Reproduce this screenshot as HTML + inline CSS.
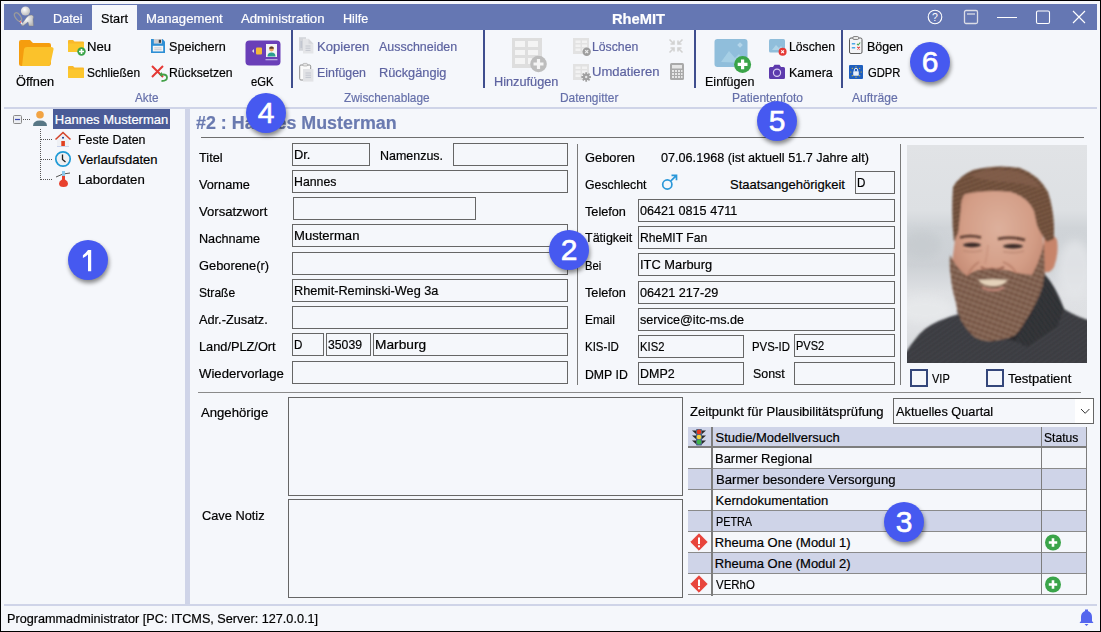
<!DOCTYPE html>
<html><head><meta charset="utf-8"><style>
html,body{margin:0;padding:0;}
body{width:1101px;height:632px;background:#000;position:relative;overflow:hidden;font-family:"Liberation Sans",sans-serif;}
.a{position:absolute;}
.t{position:absolute;white-space:nowrap;-webkit-text-stroke:0.2px currentColor;}
svg.a{overflow:visible;}
.badge{position:absolute;width:40px;height:40px;border-radius:50%;background:#4659f0;color:#fff;font-size:30px;line-height:40px;text-align:center;box-shadow:1px 3px 4px rgba(0,0,0,0.45);-webkit-text-stroke:0.6px #fff;}
</style></head><body>
<div class="a" style="left:1px;top:1px;width:1099px;height:630px;background:#f5f7fb"></div>
<div class="a" style="left:4px;top:4px;width:1093px;height:26px;background:#6577b3"></div>
<div class="a" style="left:92px;top:5px;width:45px;height:25px;background:#f5f7fb"></div>
<div class="t" style="left:53.40px;top:12.20px;font-size:13px;line-height:13px;color:#fff;font-weight:400;transform:scaleX(0.9736);transform-origin:0 0;">Datei</div>
<div class="t" style="left:101.00px;top:12.20px;font-size:13px;line-height:13px;color:#000;font-weight:400;transform:scaleX(0.9818);transform-origin:0 0;">Start</div>
<div class="t" style="left:146.10px;top:12.20px;font-size:13px;line-height:13px;color:#fff;font-weight:400;transform:scaleX(1.0105);transform-origin:0 0;">Management</div>
<div class="t" style="left:241.40px;top:12.20px;font-size:13px;line-height:13px;color:#fff;font-weight:400;transform:scaleX(1.0133);transform-origin:0 0;">Administration</div>
<div class="t" style="left:343.20px;top:12.20px;font-size:13px;line-height:13px;color:#fff;font-weight:400;transform:scaleX(0.9692);transform-origin:0 0;">Hilfe</div>
<div class="t" style="left:611.80px;top:10.50px;font-size:15px;line-height:15px;color:#fff;font-weight:700;transform:scaleX(0.9797);transform-origin:0 0;">RheMIT</div>
<svg class="a" style="left:12px;top:5px;" width="24" height="23" viewBox="0 0 24 23">
<defs><radialGradient id="hg" cx="0.4" cy="0.35" r="0.7"><stop offset="0" stop-color="#fff"/><stop offset="1" stop-color="#b8b8b8"/></radialGradient></defs>
<path d="M9 20 L15 12 Q17 9.5 20 10 Q22.5 11 21 14 L21.5 21 L17 21 L16 17 L11 21 Z" fill="url(#hg)" stroke="#777" stroke-width="0.4"/>
<circle cx="13.5" cy="6" r="4.6" fill="url(#hg)"/>
<ellipse cx="6" cy="12" rx="2.6" ry="4.8" transform="rotate(-35 6 12)" fill="none" stroke="#9a9a9a" stroke-width="1.3"/>
<line x1="8" y1="16" x2="10" y2="19" stroke="#eee" stroke-width="1.5"/>
<circle cx="8.5" cy="17" r="0.8" fill="#e33"/>
</svg>
<svg class="a" style="left:926px;top:8px;" width="18" height="18" viewBox="0 0 18 18"><circle cx="9" cy="9" r="6.8" fill="none" stroke="#fff" stroke-width="1.1"/><text x="9" y="12.6" font-size="10.5" font-family="Liberation Sans" fill="#fff" text-anchor="middle">?</text></svg>
<svg class="a" style="left:962px;top:9px;" width="18" height="17" viewBox="0 0 18 17"><rect x="2.5" y="1.5" width="13" height="13" rx="1.5" fill="none" stroke="#dcdde6" stroke-width="1.3"/><line x1="5" y1="5" x2="13" y2="5" stroke="#dcdde6" stroke-width="1.3"/></svg>
<div class="a" style="left:997px;top:16.5px;width:20px;height:1.2px;background:#fff"></div>
<svg class="a" style="left:1034px;top:9px;" width="18" height="17" viewBox="0 0 18 17"><rect x="2.5" y="2" width="13" height="12.5" rx="1.5" fill="none" stroke="#fff" stroke-width="1.1"/></svg>
<svg class="a" style="left:1071px;top:9px;" width="17" height="17" viewBox="0 0 17 17"><path d="M2 2 L14 14 M14 2 L2 14" stroke="#fff" stroke-width="1.15"/></svg>
<div class="a" style="left:291px;top:30px;width:2px;height:57.5px;background:#3f4e8e"></div>
<div class="a" style="left:483px;top:30px;width:2px;height:57.5px;background:#3f4e8e"></div>
<div class="a" style="left:694px;top:30px;width:2px;height:57.5px;background:#3f4e8e"></div>
<div class="a" style="left:841px;top:30px;width:2px;height:57.5px;background:#3f4e8e"></div>
<div class="a" style="left:4px;top:107px;width:1093px;height:2px;background:#cfd4e8"></div>
<svg class="a" style="left:18px;top:39px;" width="36" height="28" viewBox="0 0 36 28"><path d="M1 3 Q1 1 3 1 L12 1 L15 4 L31 4 Q33 4 33 6 L33 24 Q33 27 30 27 L3 27 Q1 27 1 25 Z" fill="#f59d0e"/>
<path d="M6 10 Q6.5 8 9 8 L33 8 Q36 8 35.5 10.5 L32.5 24.5 Q32 27 29.5 27 L4 27 Z" fill="#fbc22b"/></svg>
<div class="t" style="left:15.70px;top:75.00px;font-size:13px;line-height:13px;color:#000;font-weight:400;transform:scaleX(0.9820);transform-origin:0 0;">&Ouml;ffnen</div>
<svg class="a" style="left:67px;top:38px;" width="20" height="20" viewBox="0 0 20 20"><path d="M1 3 Q1 2 2 2 L6 2 L7.5 3.5 L16 3.5 Q17 3.5 17 4.5 L17 13 Q17 14 16 14 L2 14 Q1 14 1 13 Z" fill="#f9b92a"/>
<path d="M1 5.5 L17 5.5 L17 13 Q17 14 16 14 L2 14 Q1 14 1 13 Z" fill="#fcc72e"/>
<circle cx="14.5" cy="13.5" r="4.2" fill="#3aa449"/><path d="M14.5 11 V16 M12 13.5 H17" stroke="#fff" stroke-width="1.6"/></svg>
<div class="t" style="left:87.00px;top:40.00px;font-size:13px;line-height:13px;color:#000;font-weight:400;transform:scaleX(1.0084);transform-origin:0 0;">Neu</div>
<svg class="a" style="left:67px;top:64px;" width="20" height="16" viewBox="0 0 20 16"><path d="M1 3 Q1 2 2 2 L6 2 L7.5 3.5 L16 3.5 Q17 3.5 17 4.5 L17 13 Q17 14 16 14 L2 14 Q1 14 1 13 Z" fill="#f9b92a"/>
<path d="M1 5.5 L17 5.5 L17 13 Q17 14 16 14 L2 14 Q1 14 1 13 Z" fill="#fcc72e"/></svg>
<div class="t" style="left:87.00px;top:66.00px;font-size:13px;line-height:13px;color:#000;font-weight:400;transform:scaleX(0.9170);transform-origin:0 0;">Schlie&szlig;en</div>
<svg class="a" style="left:150px;top:38px;" width="16" height="16" viewBox="0 0 16 16"><path d="M1 1 L12.5 1 L15 3.5 L15 15 L1 15 Z" fill="#2e8fd5"/>
<rect x="3.8" y="1" width="8.2" height="4.6" fill="#cfcfd2"/><rect x="8.8" y="1.8" width="2.2" height="3" fill="#3a3a3a"/>
<rect x="2.8" y="7.8" width="10.4" height="5.6" fill="#f5f5f6"/><path d="M4.3 9.9 H11.7 M4.3 11.7 H11.7" stroke="#c4c4c8" stroke-width="0.9"/></svg>
<div class="t" style="left:169.00px;top:40.00px;font-size:13px;line-height:13px;color:#000;font-weight:400;transform:scaleX(0.9709);transform-origin:0 0;">Speichern</div>
<svg class="a" style="left:150px;top:64px;" width="19" height="19" viewBox="0 0 19 19"><path d="M2 2 L13 13 M13 2 L2 13" stroke="#e53935" stroke-width="2"/>
<path d="M11.5 17 Q17 17 17 13.5 Q17 10.5 13 10.5 L10.5 10.5" fill="none" stroke="#43a047" stroke-width="1.8"/><path d="M9 10.5 L12 8 L12 13 Z" fill="#43a047"/></svg>
<div class="t" style="left:169.00px;top:65.50px;font-size:13px;line-height:13px;color:#000;font-weight:400;transform:scaleX(0.9367);transform-origin:0 0;">R&uuml;cksetzen</div>
<svg class="a" style="left:245px;top:40px;" width="36" height="26" viewBox="0 0 36 26"><rect x="0.5" y="0.5" width="35" height="25" rx="4" fill="#6a3fb8"/>
<rect x="21" y="4" width="11" height="13" fill="#f4f4f6"/>
<circle cx="26.5" cy="9" r="2.4" fill="#f0a35e"/><path d="M22.5 16.5 Q22.5 12.5 26.5 12.5 Q30.5 12.5 30.5 16.5 Z" fill="#2a9d8f"/>
<path d="M26.5 6.5 Q24 6.3 24.3 8.8 L28.8 8.8 Q29 6.3 26.5 6.5Z" fill="#5a3a2a"/>
<rect x="20.5" y="19" width="12" height="1.3" fill="#b6a6e0"/>
<rect x="11" y="7.5" width="6" height="7" rx="1" fill="#f4b93a"/><path d="M7 11 L9 9 L9 13 Z" fill="#ddd"/></svg>
<div class="t" style="left:250.50px;top:74.50px;font-size:13px;line-height:13px;color:#000;font-weight:400;transform:scaleX(0.8654);transform-origin:0 0;">eGK</div>
<div class="t" style="left:135.40px;top:90.60px;font-size:13px;line-height:13px;color:#6670aa;font-weight:400;transform:scaleX(0.9038);transform-origin:0 0;">Akte</div>
<svg class="a" style="left:298px;top:36px;" width="17" height="19" viewBox="0 0 17 19"><rect x="1" y="1.2" width="7" height="13.5" fill="#d3d5da"/><rect x="2.5" y="5" width="1.6" height="7" fill="#c2c6d0"/>
<path d="M5 2.8 L10.5 2.8 L15.4 7.8 L15.4 17.4 L5 17.4 Z" fill="#e4e5e8"/><path d="M10.5 2.8 L10.5 7.8 L15.4 7.8" fill="#d6d7db"/>
<path d="M7.5 10 H12.5 M7.5 12.2 H12.5 M7.5 14.4 H12.5" stroke="#c0c3cc" stroke-width="0.9"/></svg>
<div class="t" style="left:317.40px;top:40.00px;font-size:13px;line-height:13px;color:#5d63a0;font-weight:400;transform:scaleX(1.0058);transform-origin:0 0;">Kopieren</div>
<div class="t" style="left:378.50px;top:40.00px;font-size:13px;line-height:13px;color:#5d63a0;font-weight:400;transform:scaleX(0.9572);transform-origin:0 0;">Ausschneiden</div>
<svg class="a" style="left:298px;top:62px;" width="17" height="21" viewBox="0 0 17 21"><rect x="1.7" y="3" width="11" height="15" rx="1.2" fill="#fafafa" stroke="#8e8e8e" stroke-width="1"/><rect x="5" y="1.4" width="4.4" height="2.6" rx="0.8" fill="#e6e6e6" stroke="#a0a0a0" stroke-width="0.6"/>
<path d="M5 7 L15.4 7 L15.4 19.6 L5 19.6 Z" fill="#e2e3e6"/>
<path d="M7.5 11 H13 M7.5 13.2 H13 M7.5 15.4 H13" stroke="#c0c3cc" stroke-width="0.9"/></svg>
<div class="t" style="left:317.40px;top:65.60px;font-size:13px;line-height:13px;color:#5d63a0;font-weight:400;transform:scaleX(0.9552);transform-origin:0 0;">Einf&uuml;gen</div>
<div class="t" style="left:378.50px;top:65.60px;font-size:13px;line-height:13px;color:#5d63a0;font-weight:400;transform:scaleX(0.9825);transform-origin:0 0;">R&uuml;ckg&auml;ngig</div>
<div class="t" style="left:343.60px;top:90.80px;font-size:13px;line-height:13px;color:#6670aa;font-weight:400;transform:scaleX(0.9116);transform-origin:0 0;">Zwischenablage</div>
<svg class="a" style="left:511px;top:37px;" width="38" height="37" viewBox="0 0 38 37"><rect x="1" y="1" width="30" height="30" fill="#dedede"/>
<g fill="#f4f4f4"><rect x="4" y="4" width="10" height="6"/><rect x="17" y="4" width="10" height="6"/><rect x="4" y="13" width="10" height="5"/><rect x="17" y="13" width="10" height="5"/><rect x="4" y="21" width="10" height="6"/><rect x="17" y="21" width="10" height="6"/></g>
<circle cx="27.5" cy="27" r="8.3" fill="#bdbdbd"/><path d="M27.5 22 V32 M22.5 27 H32.5" stroke="#f4f4f4" stroke-width="3.2"/></svg>
<div class="t" style="left:494.20px;top:75.00px;font-size:13px;line-height:13px;color:#5d63a0;font-weight:400;transform:scaleX(0.9787);transform-origin:0 0;">Hinzuf&uuml;gen</div>
<svg class="a" style="left:572px;top:37px;" width="22" height="22" viewBox="0 0 22 22"><rect x="1" y="1" width="16" height="16" fill="#e2e2e2"/><g fill="#f2f2f2"><rect x="3.5" y="3.5" width="5" height="2.5"/><rect x="10" y="3.5" width="5" height="2.5"/><rect x="3.5" y="7.5" width="5" height="2.5"/><rect x="10" y="7.5" width="5" height="2.5"/><rect x="3.5" y="11.5" width="5" height="2.5"/><rect x="10" y="11.5" width="5" height="2.5"/></g><circle cx="14.7" cy="14.7" r="4.2" fill="#9e9e9e"/><path d="M13.2 13.2 L16.2 16.2 M16.2 13.2 L13.2 16.2" stroke="#eee" stroke-width="1.2"/></svg>
<div class="t" style="left:592.40px;top:40.00px;font-size:13px;line-height:13px;color:#5d63a0;font-weight:400;transform:scaleX(0.9409);transform-origin:0 0;">L&ouml;schen</div>
<svg class="a" style="left:572px;top:63px;" width="22" height="22" viewBox="0 0 22 22"><rect x="1" y="1" width="16" height="16" fill="#e2e2e2"/><g fill="#f2f2f2"><rect x="3.5" y="3.5" width="5" height="2.5"/><rect x="10" y="3.5" width="5" height="2.5"/><rect x="3.5" y="7.5" width="5" height="2.5"/><rect x="10" y="7.5" width="5" height="2.5"/><rect x="3.5" y="11.5" width="5" height="2.5"/><rect x="10" y="11.5" width="5" height="2.5"/></g><g transform="translate(14.2 14)"><circle r="3.3" fill="#a0a0a0"/><g stroke="#a0a0a0" stroke-width="1.8"><path d="M0 -4.8 V4.8 M-4.8 0 H4.8 M-3.4 -3.4 L3.4 3.4 M3.4 -3.4 L-3.4 3.4"/></g><circle r="1.2" fill="#e8e8e8"/></g></svg>
<div class="t" style="left:592.40px;top:65.40px;font-size:13px;line-height:13px;color:#5d63a0;font-weight:400;transform:scaleX(1.0045);transform-origin:0 0;">Umdatieren</div>
<svg class="a" style="left:668px;top:38px;" width="17" height="16" viewBox="0 0 17 16"><g stroke="#d2d2d2" stroke-width="1.6" fill="none"><path d="M1.5 1.5 L6 6 M6 2.5 V6 H2.5"/><path d="M14.5 1.5 L10 6 M10 2.5 V6 H13.5"/><path d="M1.5 14.5 L6 10 M6 13.5 V10 H2.5"/><path d="M14.5 14.5 L10 10 M10 13.5 V10 H13.5"/></g></svg>
<svg class="a" style="left:669px;top:62px;" width="16" height="19" viewBox="0 0 16 19"><rect x="1" y="1" width="14" height="17" rx="1.5" fill="#a9a9a9"/><rect x="3" y="3" width="10" height="3.5" fill="#e6e6e6"/><g fill="#e6e6e6"><rect x="3" y="8" width="2" height="2"/><rect x="6" y="8" width="2" height="2"/><rect x="9" y="8" width="2" height="2"/><rect x="12" y="8" width="1.5" height="2"/><rect x="3" y="11" width="2" height="2"/><rect x="6" y="11" width="2" height="2"/><rect x="9" y="11" width="2" height="2"/><rect x="12" y="11" width="1.5" height="2"/><rect x="3" y="14" width="2" height="2"/><rect x="6" y="14" width="2" height="2"/><rect x="9" y="14" width="2" height="2"/><rect x="12" y="14" width="1.5" height="2"/></g></svg>
<div class="t" style="left:559.60px;top:90.50px;font-size:13px;line-height:13px;color:#6670aa;font-weight:400;transform:scaleX(0.9182);transform-origin:0 0;">Datengitter</div>
<svg class="a" style="left:713px;top:38px;" width="44" height="36" viewBox="0 0 44 36"><rect x="1.5" y="1" width="33" height="28" rx="3" fill="#90bedb"/>
<path d="M8 24 L16 13 L22 20 L26 16 L33 25 Z" fill="#a9d0e6" opacity="0.9"/><rect x="25" y="5" width="4" height="4" fill="#b4d6ea" transform="rotate(45 27 7)"/>
<circle cx="29.6" cy="26.4" r="8.5" fill="#3aa449"/><path d="M29.6 21.5 V31.3 M24.7 26.4 H34.5" stroke="#fff" stroke-width="3.2"/></svg>
<div class="t" style="left:705.30px;top:75.00px;font-size:13px;line-height:13px;color:#000;font-weight:400;transform:scaleX(0.9630);transform-origin:0 0;">Einf&uuml;gen</div>
<svg class="a" style="left:768px;top:38px;" width="20" height="19" viewBox="0 0 20 19"><rect x="1" y="1" width="16" height="13.5" rx="1.5" fill="#90bedb"/><path d="M4 12 L8 7 L11 10 L13 8 L16 12Z" fill="#b0d4e8"/>
<circle cx="14.6" cy="13.8" r="4" fill="#e53935"/><path d="M13.2 12.4 L16 15.2 M16 12.4 L13.2 15.2" stroke="#fff" stroke-width="1.1"/></svg>
<div class="t" style="left:788.50px;top:39.80px;font-size:13px;line-height:13px;color:#000;font-weight:400;transform:scaleX(0.9389);transform-origin:0 0;">L&ouml;schen</div>
<svg class="a" style="left:768px;top:63px;" width="18" height="17" viewBox="0 0 18 17"><path d="M1 5.5 Q1 4 2.5 4 L5 4 L6.5 1.8 L11.5 1.8 L13 4 L15.5 4 Q17 4 17 5.5 L17 14.5 Q17 16 15.5 16 L2.5 16 Q1 16 1 14.5 Z" fill="#5d3aad"/>
<circle cx="9" cy="9.8" r="3.6" fill="none" stroke="#d8cdf2" stroke-width="1.2"/></svg>
<div class="t" style="left:788.50px;top:65.80px;font-size:13px;line-height:13px;color:#000;font-weight:400;transform:scaleX(0.9627);transform-origin:0 0;">Kamera</div>
<div class="t" style="left:731.70px;top:90.50px;font-size:13px;line-height:13px;color:#6670aa;font-weight:400;transform:scaleX(0.9256);transform-origin:0 0;">Patientenfoto</div>
<svg class="a" style="left:848px;top:35px;" width="16" height="20" viewBox="0 0 16 20"><rect x="1.5" y="3" width="12.5" height="15.5" rx="1.5" fill="#f3f4f7" stroke="#5b5b5b" stroke-width="1"/>
<rect x="5" y="1.5" width="5.5" height="3" rx="1" fill="#e8e8e8" stroke="#6b6b6b" stroke-width="0.8"/>
<path d="M3.8 8.8 H7.2 M3.8 12.8 H7.2" stroke="#4aa8e8" stroke-width="1.4"/>
<path d="M9 8.8 L10.2 10 L12.2 7.5" stroke="#43a047" stroke-width="1.1" fill="none"/>
<path d="M9.3 11.8 L11.8 14.3 M11.8 11.8 L9.3 14.3" stroke="#e53935" stroke-width="1.1"/></svg>
<div class="t" style="left:867.20px;top:39.70px;font-size:13px;line-height:13px;color:#000;font-weight:400;transform:scaleX(0.9574);transform-origin:0 0;">B&ouml;gen</div>
<svg class="a" style="left:848px;top:64px;" width="16" height="16" viewBox="0 0 16 16"><rect x="1" y="1" width="14" height="14" rx="1" fill="#1f5fbf"/>
<g fill="#f5c518"><circle cx="8" cy="2.8" r="0.6"/><circle cx="8" cy="13.2" r="0.6"/><circle cx="2.8" cy="8" r="0.6"/><circle cx="13.2" cy="8" r="0.6"/><circle cx="4.3" cy="4.3" r="0.6"/><circle cx="11.7" cy="4.3" r="0.6"/><circle cx="4.3" cy="11.7" r="0.6"/><circle cx="11.7" cy="11.7" r="0.6"/></g>
<rect x="5.2" y="7.2" width="5.6" height="4.5" rx="0.6" fill="#e8eef8"/><path d="M6.3 7.4 V6 Q6.3 4.3 8 4.3 Q9.7 4.3 9.7 6 V7.4" fill="none" stroke="#e8eef8" stroke-width="1"/></svg>
<div class="t" style="left:867.50px;top:66.00px;font-size:13px;line-height:13px;color:#000;font-weight:400;transform:scaleX(0.8644);transform-origin:0 0;">GDPR</div>
<div class="t" style="left:852.40px;top:90.80px;font-size:13px;line-height:13px;color:#6670aa;font-weight:400;transform:scaleX(0.9287);transform-origin:0 0;">Auftr&auml;ge</div>
<div class="a" style="left:185px;top:109px;width:5px;height:495px;background:#cfd4e8"></div>
<div class="a" style="left:53px;top:109px;width:117px;height:20px;background:#4a5b97"></div>
<div class="t" style="left:54.80px;top:112.80px;font-size:13px;line-height:13px;color:#fff;font-weight:400;">Hannes Musterman</div>
<svg class="a" style="left:12px;top:114px;" width="11" height="11" viewBox="0 0 11 11"><rect x="1.5" y="1.5" width="8" height="8" rx="1" fill="#eceef2" stroke="#8a8a8a" stroke-width="1"/><line x1="3" y1="5.5" x2="8" y2="5.5" stroke="#3a4ab0" stroke-width="1.2"/></svg>
<svg class="a" style="left:22px;top:118px;" width="40" height="64" viewBox="0 0 40 64"><g stroke="#555" stroke-width="1" stroke-dasharray="1 1">
<line x1="1" y1="1.5" x2="9" y2="1.5"/>
<line x1="18.5" y1="11" x2="18.5" y2="62"/>
<line x1="19" y1="21.5" x2="31" y2="21.5"/><line x1="19" y1="41.5" x2="31" y2="41.5"/><line x1="19" y1="61.5" x2="31" y2="61.5"/></g></svg>
<svg class="a" style="left:32px;top:110px;" width="16" height="17" viewBox="0 0 16 17"><circle cx="8" cy="4.7" r="3.8" fill="#f2a444"/><path d="M1 16 Q1 10.5 8 10.5 Q15 10.5 15 16 Z" fill="#587785"/></svg>
<svg class="a" style="left:54px;top:131px;" width="18" height="17" viewBox="0 0 18 17"><path d="M9 1.5 L1.5 8.5 L3 8.5 L3 15.5 L15 15.5 L15 8.5 L16.5 8.5 Z" fill="#eef0f4"/>
<path d="M1.5 8.5 L9 1.5 L16.5 8.5" fill="none" stroke="#d4452b" stroke-width="1.6"/>
<rect x="7.3" y="10" width="3.6" height="5.5" fill="#e0401f"/><circle cx="9" cy="6.8" r="1" fill="#1a3d8a"/>
<line x1="3" y1="15.5" x2="15" y2="15.5" stroke="#c9d3ea" stroke-width="1"/></svg>
<svg class="a" style="left:54px;top:150px;" width="18" height="18" viewBox="0 0 18 18"><circle cx="9" cy="9" r="7.2" fill="#eef0f3" stroke="#1e9ad6" stroke-width="1.7"/><path d="M8.5 4.5 V9.5 L11.5 12" fill="none" stroke="#222" stroke-width="1.3"/></svg>
<svg class="a" style="left:54px;top:170px;" width="18" height="18" viewBox="0 0 18 18"><path d="M2 7 Q9 3 16 3" fill="none" stroke="#555" stroke-width="1"/><rect x="8" y="1" width="3" height="6" fill="#8cc8ea"/>
<path d="M8 6 L11 6 L11 9.5 Q14 11 14 13.5 Q14 17 9.5 17 Q5 17 5 13.5 Q5 11 8 9.5 Z" fill="#e8412d"/></svg>
<div class="t" style="left:77.60px;top:132.80px;font-size:13px;line-height:13px;color:#000;font-weight:400;transform:scaleX(0.9534);transform-origin:0 0;">Feste Daten</div>
<div class="t" style="left:78.00px;top:152.80px;font-size:13px;line-height:13px;color:#000;font-weight:400;">Verlaufsdaten</div>
<div class="t" style="left:77.60px;top:172.80px;font-size:13px;line-height:13px;color:#000;font-weight:400;transform:scaleX(1.0152);transform-origin:0 0;">Labordaten</div>
<div class="t" style="left:196.40px;top:114.16px;font-size:18px;line-height:18px;color:#6a7ab0;font-weight:700;transform:scaleX(0.9931);transform-origin:0 0;">#2 : Hannes Musterman</div>
<div class="a" style="left:201px;top:137px;width:883px;height:1px;background:#6e6e6e"></div>
<div class="t" style="left:199.30px;top:150.80px;font-size:13px;line-height:13px;color:#000;font-weight:400;transform:scaleX(0.9793);transform-origin:0 0;">Titel</div>
<div class="t" style="left:199.30px;top:178.00px;font-size:13px;line-height:13px;color:#000;font-weight:400;transform:scaleX(0.9788);transform-origin:0 0;">Vorname</div>
<div class="t" style="left:199.30px;top:204.90px;font-size:13px;line-height:13px;color:#000;font-weight:400;transform:scaleX(1.0059);transform-origin:0 0;">Vorsatzwort</div>
<div class="t" style="left:199.30px;top:232.00px;font-size:13px;line-height:13px;color:#000;font-weight:400;transform:scaleX(0.9714);transform-origin:0 0;">Nachname</div>
<div class="t" style="left:199.30px;top:259.40px;font-size:13px;line-height:13px;color:#000;font-weight:400;transform:scaleX(0.9887);transform-origin:0 0;">Geborene(r)</div>
<div class="t" style="left:199.30px;top:286.00px;font-size:13px;line-height:13px;color:#000;font-weight:400;transform:scaleX(0.9256);transform-origin:0 0;">Stra&szlig;e</div>
<div class="t" style="left:199.30px;top:312.60px;font-size:13px;line-height:13px;color:#000;font-weight:400;transform:scaleX(0.9800);transform-origin:0 0;">Adr.-Zusatz.</div>
<div class="t" style="left:199.30px;top:339.80px;font-size:13px;line-height:13px;color:#000;font-weight:400;transform:scaleX(0.9821);transform-origin:0 0;">Land/PLZ/Ort</div>
<div class="t" style="left:199.30px;top:366.80px;font-size:13px;line-height:13px;color:#000;font-weight:400;transform:scaleX(1.0119);transform-origin:0 0;">Wiedervorlage</div>
<div class="a" style="left:292px;top:143px;width:78px;height:23px;border:1px solid #666666;box-sizing:border-box"></div>
<div class="t" style="left:294.30px;top:147.60px;font-size:13px;line-height:13px;color:#000;font-weight:400;transform:scaleX(0.9880);transform-origin:0 0;">Dr.</div>
<div class="t" style="left:380.40px;top:148.50px;font-size:13px;line-height:13px;color:#000;font-weight:400;transform:scaleX(0.9589);transform-origin:0 0;">Namenzus.</div>
<div class="a" style="left:453px;top:143px;width:115px;height:23px;border:1px solid #666666;box-sizing:border-box"></div>
<div class="a" style="left:292px;top:170px;width:276px;height:23px;border:1px solid #666666;box-sizing:border-box"></div>
<div class="t" style="left:294.30px;top:174.60px;font-size:13px;line-height:13px;color:#000;font-weight:400;transform:scaleX(0.9464);transform-origin:0 0;">Hannes</div>
<div class="a" style="left:293px;top:197px;width:183px;height:23px;border:1px solid #666666;box-sizing:border-box"></div>
<div class="a" style="left:292px;top:224px;width:276px;height:23px;border:1px solid #666666;box-sizing:border-box"></div>
<div class="t" style="left:294.30px;top:228.60px;font-size:13px;line-height:13px;color:#000;font-weight:400;transform:scaleX(1.0062);transform-origin:0 0;">Musterman</div>
<div class="a" style="left:292px;top:252px;width:276px;height:23px;border:1px solid #666666;box-sizing:border-box"></div>
<div class="a" style="left:292px;top:279px;width:276px;height:23px;border:1px solid #666666;box-sizing:border-box"></div>
<div class="t" style="left:294.30px;top:283.60px;font-size:13px;line-height:13px;color:#000;font-weight:400;transform:scaleX(0.9763);transform-origin:0 0;">Rhemit-Reminski-Weg 3a</div>
<div class="a" style="left:292px;top:306px;width:276px;height:23px;border:1px solid #666666;box-sizing:border-box"></div>
<div class="a" style="left:292px;top:333px;width:32px;height:23px;border:1px solid #666666;box-sizing:border-box"></div>
<div class="t" style="left:294.30px;top:337.60px;font-size:13px;line-height:13px;color:#000;font-weight:400;transform:scaleX(0.8936);transform-origin:0 0;">D</div>
<div class="a" style="left:326px;top:333px;width:45px;height:23px;border:1px solid #666666;box-sizing:border-box"></div>
<div class="t" style="left:328.30px;top:337.60px;font-size:13px;line-height:13px;color:#000;font-weight:400;transform:scaleX(0.9418);transform-origin:0 0;">35039</div>
<div class="a" style="left:373px;top:333px;width:195px;height:23px;border:1px solid #666666;box-sizing:border-box"></div>
<div class="t" style="left:375.30px;top:337.60px;font-size:13px;line-height:13px;color:#000;font-weight:400;transform:scaleX(1.0558);transform-origin:0 0;">Marburg</div>
<div class="a" style="left:292px;top:361px;width:276px;height:23px;border:1px solid #666666;box-sizing:border-box"></div>
<div class="a" style="left:577px;top:144px;width:1px;height:241px;background:#7a7a7a"></div>
<div class="t" style="left:585.40px;top:150.70px;font-size:13px;line-height:13px;color:#000;font-weight:400;transform:scaleX(0.9881);transform-origin:0 0;">Geboren</div>
<div class="t" style="left:661.40px;top:150.70px;font-size:13px;line-height:13px;color:#000;font-weight:400;transform:scaleX(0.9719);transform-origin:0 0;">07.06.1968 (ist aktuell 51.7 Jahre alt)</div>
<div class="t" style="left:585.40px;top:177.60px;font-size:13px;line-height:13px;color:#000;font-weight:400;transform:scaleX(0.9446);transform-origin:0 0;">Geschlecht</div>
<svg class="a" style="left:661px;top:173px;" width="18" height="18" viewBox="0 0 18 18"><circle cx="6.3" cy="11.5" r="4.6" fill="none" stroke="#2b98d9" stroke-width="1.7"/><path d="M9.6 8.2 L15.5 2.3 M10.5 2.3 H15.5 V7.3" fill="none" stroke="#2b98d9" stroke-width="1.7"/></svg>
<div class="t" style="left:730.00px;top:177.60px;font-size:13px;line-height:13px;color:#000;font-weight:400;">Staatsangeh&ouml;rigkeit</div>
<div class="a" style="left:855px;top:171px;width:40px;height:23px;border:1px solid #666666;box-sizing:border-box"></div>
<div class="t" style="left:857.30px;top:175.60px;font-size:13px;line-height:13px;color:#000;font-weight:400;transform:scaleX(0.8936);transform-origin:0 0;">D</div>
<div class="t" style="left:585.40px;top:204.50px;font-size:13px;line-height:13px;color:#000;font-weight:400;transform:scaleX(0.9761);transform-origin:0 0;">Telefon</div>
<div class="a" style="left:638px;top:199px;width:257px;height:23px;border:1px solid #666666;box-sizing:border-box"></div>
<div class="t" style="left:640.30px;top:203.60px;font-size:13px;line-height:13px;color:#000;font-weight:400;transform:scaleX(0.9701);transform-origin:0 0;">06421 0815 4711</div>
<div class="t" style="left:585.40px;top:231.20px;font-size:13px;line-height:13px;color:#000;font-weight:400;transform:scaleX(0.9633);transform-origin:0 0;">T&auml;tigkeit</div>
<div class="a" style="left:638px;top:226px;width:257px;height:23px;border:1px solid #666666;box-sizing:border-box"></div>
<div class="t" style="left:640.30px;top:230.60px;font-size:13px;line-height:13px;color:#000;font-weight:400;transform:scaleX(0.9333);transform-origin:0 0;">RheMIT Fan</div>
<div class="t" style="left:585.40px;top:258.90px;font-size:13px;line-height:13px;color:#000;font-weight:400;transform:scaleX(0.8617);transform-origin:0 0;">Bei</div>
<div class="a" style="left:638px;top:253px;width:257px;height:23px;border:1px solid #666666;box-sizing:border-box"></div>
<div class="t" style="left:640.30px;top:257.60px;font-size:13px;line-height:13px;color:#000;font-weight:400;transform:scaleX(0.9890);transform-origin:0 0;">ITC Marburg</div>
<div class="t" style="left:585.40px;top:286.00px;font-size:13px;line-height:13px;color:#000;font-weight:400;transform:scaleX(0.9761);transform-origin:0 0;">Telefon</div>
<div class="a" style="left:638px;top:281px;width:257px;height:23px;border:1px solid #666666;box-sizing:border-box"></div>
<div class="t" style="left:640.30px;top:285.60px;font-size:13px;line-height:13px;color:#000;font-weight:400;transform:scaleX(0.9751);transform-origin:0 0;">06421 217-29</div>
<div class="t" style="left:585.40px;top:312.80px;font-size:13px;line-height:13px;color:#000;font-weight:400;transform:scaleX(0.9200);transform-origin:0 0;">Email</div>
<div class="a" style="left:638px;top:308px;width:257px;height:23px;border:1px solid #666666;box-sizing:border-box"></div>
<div class="t" style="left:640.30px;top:312.60px;font-size:13px;line-height:13px;color:#000;font-weight:400;transform:scaleX(0.9720);transform-origin:0 0;">service@itc-ms.de</div>
<div class="t" style="left:585.40px;top:339.80px;font-size:13px;line-height:13px;color:#000;font-weight:400;transform:scaleX(0.8851);transform-origin:0 0;">KIS-ID</div>
<div class="a" style="left:638px;top:335px;width:106px;height:23px;border:1px solid #666666;box-sizing:border-box"></div>
<div class="t" style="left:640.30px;top:339.60px;font-size:13px;line-height:13px;color:#000;font-weight:400;transform:scaleX(0.8652);transform-origin:0 0;">KIS2</div>
<div class="t" style="left:752.40px;top:339.50px;font-size:13px;line-height:13px;color:#000;font-weight:400;transform:scaleX(0.8730);transform-origin:0 0;">PVS-ID</div>
<div class="a" style="left:794px;top:334px;width:101px;height:23px;border:1px solid #666666;box-sizing:border-box"></div>
<div class="t" style="left:796.30px;top:338.60px;font-size:13px;line-height:13px;color:#000;font-weight:400;transform:scaleX(0.8494);transform-origin:0 0;">PVS2</div>
<div class="t" style="left:585.40px;top:367.50px;font-size:13px;line-height:13px;color:#000;font-weight:400;transform:scaleX(0.9448);transform-origin:0 0;">DMP ID</div>
<div class="a" style="left:638px;top:362px;width:106px;height:23px;border:1px solid #666666;box-sizing:border-box"></div>
<div class="t" style="left:640.30px;top:366.60px;font-size:13px;line-height:13px;color:#000;font-weight:400;transform:scaleX(0.9584);transform-origin:0 0;">DMP2</div>
<div class="t" style="left:753.10px;top:366.80px;font-size:13px;line-height:13px;color:#000;font-weight:400;transform:scaleX(0.9548);transform-origin:0 0;">Sonst</div>
<div class="a" style="left:794px;top:362px;width:101px;height:23px;border:1px solid #666666;box-sizing:border-box"></div>
<div class="a" style="left:900px;top:144px;width:1px;height:241px;background:#7a7a7a"></div>
<svg class="a" style="left:907px;top:145px;overflow:hidden" width="180" height="218" viewBox="0 0 180 218">
<defs>
<linearGradient id="pbg" x1="0" y1="0" x2="0" y2="1">
<stop offset="0" stop-color="#e1e3e6"/><stop offset="0.3" stop-color="#dde0e3"/><stop offset="0.38" stop-color="#d0d4d8"/><stop offset="0.55" stop-color="#cdd1d5"/><stop offset="0.68" stop-color="#dfe1e4"/><stop offset="0.85" stop-color="#dee0e3"/><stop offset="1" stop-color="#d3d6d9"/>
</linearGradient>
<filter id="pb1" x="-20%" y="-20%" width="140%" height="140%"><feGaussianBlur stdDeviation="0.9"/></filter>
<filter id="pb2" x="-30%" y="-30%" width="160%" height="160%"><feGaussianBlur stdDeviation="4"/></filter>
<radialGradient id="pface" cx="0.5" cy="0.35" r="0.7"><stop offset="0" stop-color="#ddb09c"/><stop offset="0.55" stop-color="#d39d86"/><stop offset="1" stop-color="#b97d67"/></radialGradient>
<pattern id="rib" width="4" height="4" patternUnits="userSpaceOnUse" patternTransform="rotate(-35)"><rect width="4" height="4" fill="#37383c"/><rect width="4" height="1.3" fill="#4b4c51"/></pattern>
<pattern id="rib2" width="4" height="4" patternUnits="userSpaceOnUse" patternTransform="rotate(55)"><rect width="4" height="4" fill="#2c2d31"/><rect width="4" height="1.2" fill="#3f4045"/></pattern>
<pattern id="bspk" width="5" height="5" patternUnits="userSpaceOnUse" patternTransform="rotate(20)"><rect width="5" height="5" fill="#7c5a49"/><circle cx="1.2" cy="1.3" r="1" fill="#a38b7b"/><circle cx="3.8" cy="3.6" r="0.9" fill="#5a3e30"/><circle cx="3.6" cy="0.8" r="0.6" fill="#bba796"/></pattern>
<pattern id="hspk" width="4" height="4" patternUnits="userSpaceOnUse" patternTransform="rotate(-20)"><rect width="4" height="4" fill="#77553f"/><rect width="4" height="1" fill="#553a2c"/><circle cx="2" cy="2.5" r="0.6" fill="#a08270"/></pattern>
</defs>
<rect x="0" y="0" width="180" height="218" fill="url(#pbg)"/>
<g filter="url(#pb2)" opacity="0.8">
<ellipse cx="18" cy="165" rx="30" ry="14" fill="#e8eaec"/>
<ellipse cx="168" cy="125" rx="18" ry="30" fill="#e4e6e9"/>
<ellipse cx="15" cy="100" rx="20" ry="14" fill="#c6cbcf"/>
</g>
<g filter="url(#pb1)">
<!-- sweater -->
<path d="M50 165 L138 128 L140 205 L60 210 Z" fill="#2a2b2f"/>
<path d="M-4 212 Q8 192 18 184 Q30 175 52 169 L70 188 L108 196 L126 168 L137 130 Q148 140 157 164 Q170 172 184 176 L184 222 L-4 222 Z" fill="url(#rib)"/>
<path d="M136 128 Q146 136 157 164 L150 182 L120 202 L108 196 L126 168 Z" fill="url(#rib2)"/>
<!-- ear -->
<path d="M137 92 Q146 87 150 95 Q152 108 147 122 Q142 130 136 126 Z" fill="#c7846b"/>
<!-- face -->
<path d="M50 52 Q62 43 90 43 Q120 44 130 58 L136 92 L138 125 Q135 150 112 160 L72 160 Q47 150 45 118 L48 95 Z" fill="url(#pface)"/>
<!-- hair -->
<path d="M46 42 Q52 31 66 25 Q90 19 113 23 Q132 30 141 47 Q146 62 147 80 L147 94 L140 97 Q133 88 130 80 L127 66 Q121 52 104 47 Q80 44 58 49 Q54 53 54 62 L51.4 87 L47 97 Q44 70 46 42 Z" fill="url(#hspk)"/>
<path d="M62 30 Q82 22 110 26 Q128 32 134 44 Q118 38 98 37 Q76 36 62 30 Z" fill="#86614e" opacity="0.7"/>
<!-- beard -->
<path d="M43 110 Q42 122 43.8 131.8 Q45 145 48.3 155 Q50 166 53.6 174.7 Q60 186 68 192.6 Q76 197 84 196.2 Q98 195 107.3 190.8 Q114 185 118 176.5 Q124 168 128.7 158.6 Q133 150 135.9 140.8 Q138 130 137.6 122.9 L137 98 Q133 116 125 130 L96 126 L72 126 L60 131 Q50 124 43 110 Z" fill="url(#bspk)"/>
</g>
<g filter="url(#pb1)">
<!-- eyebrows -->
<path d="M53 92.5 Q63 89.5 74 92.5" stroke="#5a3a2e" stroke-width="2.6" fill="none"/>
<path d="M91 94 Q104 91 118 95" stroke="#5a3a2e" stroke-width="2.6" fill="none"/>
<!-- eyes -->
<ellipse cx="65" cy="100" rx="9" ry="2.2" fill="#3a2a26"/>
<ellipse cx="106" cy="101.3" rx="10" ry="2.2" fill="#3a2a26"/>
<path d="M56 105.5 Q65 108 75 105.5 M96 106.5 Q106 109 117 106" stroke="#b98670" stroke-width="1.6" fill="none" opacity="0.8"/>
<!-- nose -->
<path d="M81 100 Q80 112 78 119" stroke="#c48c76" stroke-width="1.5" fill="none" opacity="0.7"/>
<path d="M74 122 Q78 126 85 124 Q92 126 97 122" stroke="#9c6552" stroke-width="2.4" fill="none"/>
<path d="M72 117 Q64 122 61 130 M96 117 Q106 121 109 128" stroke="#b07560" stroke-width="1.6" fill="none" opacity="0.8"/>
<!-- mustache -->
<path d="M59 133 Q66 124 78 125 Q85 123 92 125 Q104 124 111 131 Q104 135 96 134.5 L74 134.5 Q65 136 59 133 Z" fill="url(#bspk)"/>
<!-- teeth -->
<path d="M71 135 Q86 133.5 101 135 Q96 141.5 86 141.5 Q76 141.5 71 135 Z" fill="#e4d2ba"/>
<path d="M75 142.5 Q86 148 97 142.5" stroke="#c4887a" stroke-width="2.2" fill="none"/>
</g>
</svg>

<div class="a" style="left:910px;top:369px;width:18px;height:18px;border:2px solid #34467a;box-sizing:border-box"></div>
<div class="t" style="left:931.90px;top:371.80px;font-size:13px;line-height:13px;color:#000;font-weight:400;transform:scaleX(0.8476);transform-origin:0 0;">VIP</div>
<div class="a" style="left:986px;top:369px;width:18px;height:18px;border:2px solid #34467a;box-sizing:border-box"></div>
<div class="t" style="left:1008.40px;top:371.80px;font-size:13px;line-height:13px;color:#000;font-weight:400;transform:scaleX(1.0064);transform-origin:0 0;">Testpatient</div>
<div class="a" style="left:198px;top:392px;width:883px;height:1px;background:#8a8a8a"></div>
<div class="t" style="left:200.80px;top:406.40px;font-size:13px;line-height:13px;color:#000;font-weight:400;transform:scaleX(1.0105);transform-origin:0 0;">Angeh&ouml;rige</div>
<div class="a" style="left:288px;top:397px;width:395px;height:99px;border:1px solid #666666;box-sizing:border-box"></div>
<div class="t" style="left:202.20px;top:509.20px;font-size:13px;line-height:13px;color:#000;font-weight:400;transform:scaleX(0.9843);transform-origin:0 0;">Cave Notiz</div>
<div class="a" style="left:288px;top:499px;width:395px;height:99px;border:1px solid #666666;box-sizing:border-box"></div>
<div class="t" style="left:690.00px;top:404.60px;font-size:13px;line-height:13px;color:#000;font-weight:400;transform:scaleX(1.0073);transform-origin:0 0;">Zeitpunkt f&uuml;r Plausibilit&auml;tspr&uuml;fung</div>
<div class="a" style="left:893px;top:398px;width:201px;height:26px;border:1px solid #666666;box-sizing:border-box;background:#fff"></div>
<div class="a" style="left:894px;top:399px;width:181px;height:24px;background:#f5f7fb"></div>
<div class="t" style="left:896.20px;top:404.70px;font-size:13px;line-height:13px;color:#000;font-weight:400;transform:scaleX(0.9818);transform-origin:0 0;">Aktuelles Quartal</div>
<svg class="a" style="left:1079px;top:405px;" width="12" height="12" viewBox="0 0 12 12"><path d="M2 4 L6.2 8.3 L10.4 4" fill="none" stroke="#333" stroke-width="1"/></svg>
<div class="a" style="left:688px;top:427px;width:399px;height:19px;background:#cfd4e8"></div>
<div class="a" style="left:688px;top:446px;width:399px;height:2px;background:#7d7d7d"></div>
<div class="t" style="left:715.50px;top:430.60px;font-size:13px;line-height:13px;color:#000;font-weight:400;">Studie/Modellversuch</div>
<div class="t" style="left:1044.20px;top:430.60px;font-size:13px;line-height:13px;color:#000;font-weight:400;transform:scaleX(0.9322);transform-origin:0 0;">Status</div>
<svg class="a" style="left:690px;top:428px;" width="18" height="18" viewBox="0 0 18 18"><g fill="#2a2a2a"><path d="M2 2.5 L6.5 2.5 L6.5 6.5 Z"/><path d="M2 7.5 L6.5 7.5 L6.5 11.5 Z"/><path d="M2 12.5 L6.5 12.5 L6.5 16.5 Z"/><path d="M16 2.5 L11.5 2.5 L11.5 6.5 Z"/><path d="M16 7.5 L11.5 7.5 L11.5 11.5 Z"/><path d="M16 12.5 L11.5 12.5 L11.5 16.5 Z"/></g>
<rect x="6" y="1" width="6" height="16.5" rx="1" fill="#4b6684"/>
<circle cx="9" cy="3.9" r="2.3" fill="#e8361c"/><circle cx="9" cy="9" r="2.3" fill="#f7d13a"/><circle cx="9" cy="14.1" r="2.3" fill="#3db54b"/></svg>
<div class="a" style="left:688px;top:468px;width:399px;height:1px;background:#8a8a8a"></div>
<div class="t" style="left:714.80px;top:452.00px;font-size:13px;line-height:13px;color:#000;font-weight:400;transform:scaleX(0.9959);transform-origin:0 0;">Barmer Regional</div>
<div class="a" style="left:688px;top:469px;width:399px;height:20px;background:#cfd4e8"></div>
<div class="a" style="left:688px;top:489px;width:399px;height:1px;background:#8a8a8a"></div>
<div class="t" style="left:715.50px;top:473.00px;font-size:13px;line-height:13px;color:#000;font-weight:400;transform:scaleX(1.0096);transform-origin:0 0;">Barmer besondere Versorgung</div>
<div class="a" style="left:688px;top:510px;width:399px;height:1px;background:#8a8a8a"></div>
<div class="t" style="left:715.50px;top:494.00px;font-size:13px;line-height:13px;color:#000;font-weight:400;">Kerndokumentation</div>
<div class="a" style="left:688px;top:511px;width:399px;height:20px;background:#cfd4e8"></div>
<div class="a" style="left:688px;top:531px;width:399px;height:1px;background:#8a8a8a"></div>
<div class="t" style="left:715.50px;top:515.00px;font-size:13px;line-height:13px;color:#000;font-weight:400;transform:scaleX(0.8318);transform-origin:0 0;">PETRA</div>
<div class="a" style="left:688px;top:552px;width:399px;height:1px;background:#8a8a8a"></div>
<div class="t" style="left:714.80px;top:536.00px;font-size:13px;line-height:13px;color:#000;font-weight:400;">Rheuma One (Modul 1)</div>
<svg class="a" style="left:690px;top:533px;" width="18" height="18" viewBox="0 0 18 18"><path d="M9 0.8 L17.2 9 L9 17.2 L0.8 9 Z" fill="#e8453c" stroke="#e8453c" stroke-width="1" stroke-linejoin="round"/><rect x="8" y="4.5" width="2" height="6.5" fill="#fff"/><rect x="8" y="12.3" width="2" height="2" fill="#fff"/></svg>
<svg class="a" style="left:1044px;top:533.5px;" width="18" height="18" viewBox="0 0 18 18"><circle cx="9" cy="8.5" r="8" fill="#3aa449"/><path d="M9 4.3 V12.7 M4.8 8.5 H13.2" stroke="#fff" stroke-width="2.6"/></svg>
<div class="a" style="left:688px;top:553px;width:399px;height:20px;background:#cfd4e8"></div>
<div class="a" style="left:688px;top:573px;width:399px;height:1px;background:#8a8a8a"></div>
<div class="t" style="left:714.80px;top:557.00px;font-size:13px;line-height:13px;color:#000;font-weight:400;">Rheuma One (Modul 2)</div>
<div class="a" style="left:688px;top:594px;width:399px;height:1px;background:#8a8a8a"></div>
<div class="t" style="left:715.50px;top:578.00px;font-size:13px;line-height:13px;color:#000;font-weight:400;transform:scaleX(0.8798);transform-origin:0 0;">VERhO</div>
<svg class="a" style="left:690px;top:575px;" width="18" height="18" viewBox="0 0 18 18"><path d="M9 0.8 L17.2 9 L9 17.2 L0.8 9 Z" fill="#e8453c" stroke="#e8453c" stroke-width="1" stroke-linejoin="round"/><rect x="8" y="4.5" width="2" height="6.5" fill="#fff"/><rect x="8" y="12.3" width="2" height="2" fill="#fff"/></svg>
<svg class="a" style="left:1044px;top:575.5px;" width="18" height="18" viewBox="0 0 18 18"><circle cx="9" cy="8.5" r="8" fill="#3aa449"/><path d="M9 4.3 V12.7 M4.8 8.5 H13.2" stroke="#fff" stroke-width="2.6"/></svg>
<div class="a" style="left:711px;top:427px;width:2px;height:169px;background:#7d7d7d"></div>
<div class="a" style="left:1041px;top:427px;width:1px;height:168px;background:#7d7d7d"></div>
<div class="a" style="left:1086px;top:427px;width:1px;height:168px;background:#7d7d7d"></div>
<div class="a" style="left:4px;top:604px;width:1093px;height:2px;background:#cfd4e8"></div>
<div class="t" style="left:6.80px;top:611.70px;font-size:13px;line-height:13px;color:#000;font-weight:400;transform:scaleX(0.9740);transform-origin:0 0;">Programmadministrator [PC: ITCMS, Server: 127.0.0.1]</div>
<svg class="a" style="left:1079px;top:608px;" width="15" height="19" viewBox="0 0 15 19"><path d="M7.5 1.5 L9 1.5 L9 3 Q13 4.5 13 9 L13 13 L14.5 15 L0.5 15 L2 13 L2 9 Q2 4.5 6 3 L6 1.5 Z" fill="#5466ee"/><path d="M5.5 16 L9.5 16 L7.5 18 Z" fill="#5466ee"/></svg>
<div class="badge" style="left:68px;top:239.7px"><svg width="40" height="40" style="position:absolute;left:0;top:0"><path d="M20 10.1 L23.2 10.1 L23.2 31.3 L20 31.3 L20 14.4 Q17.6 16.6 14.9 17.9 L14.9 15.3 Q17.8 13.2 20 10.1 Z" fill="#fff"/></svg></div>
<div class="badge" style="left:549px;top:230px">2</div>
<div class="badge" style="left:884px;top:501.70000000000005px">3</div>
<div class="badge" style="left:246px;top:92.6px">4</div>
<div class="badge" style="left:757px;top:101px">5</div>
<div class="badge" style="left:910px;top:42px">6</div>
</body></html>
